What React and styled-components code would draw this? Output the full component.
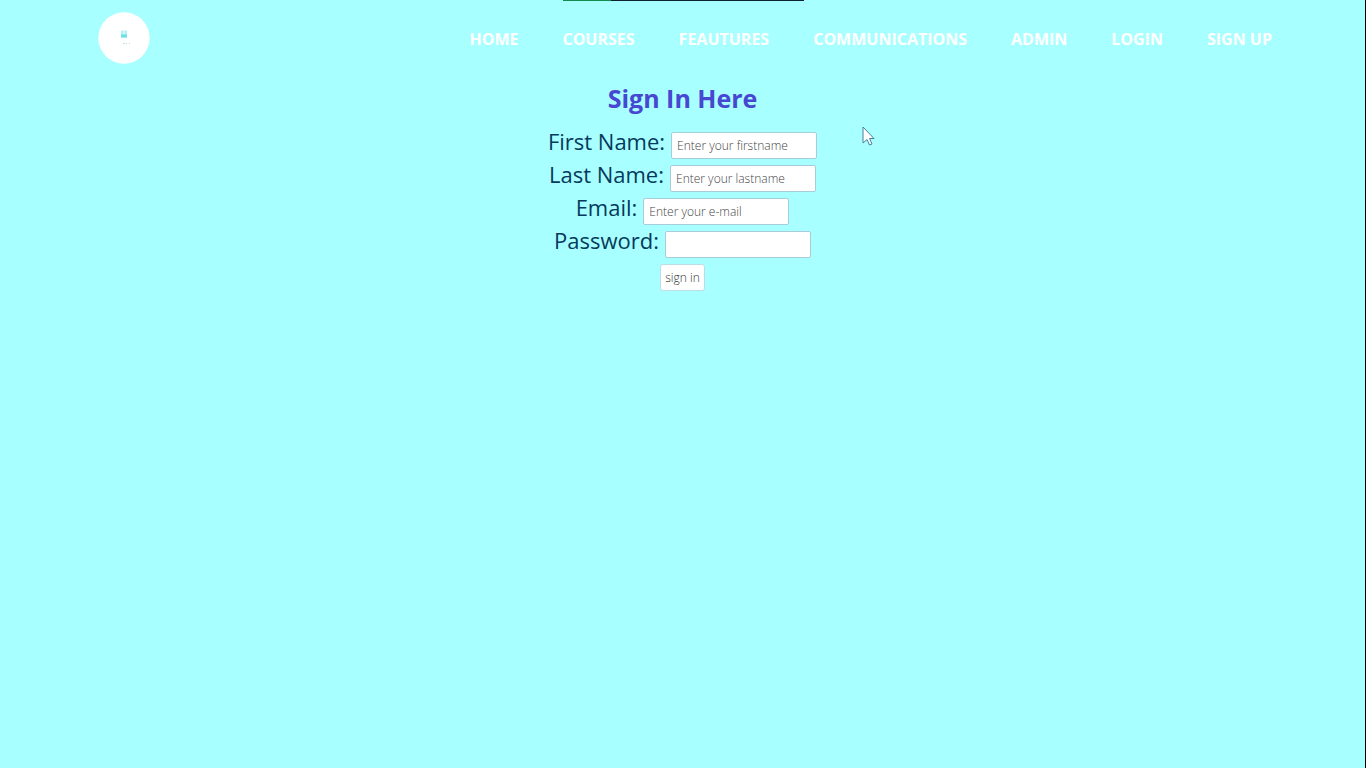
import React from "react";
import styled, { createGlobalStyle } from "styled-components";

const GlobalStyle = createGlobalStyle`
  *, *::before, *::after { box-sizing: border-box; }
  body {
    margin: 0;
    background: #a8ffff;
    font-family: "Open Sans", "Noto Sans", sans-serif;
  }
`;

const Page = styled.div`
  position: relative;
  min-height: 100vh;
  border-right: 1px solid #000;
`;

const LoadingStrip = styled.div`
  position: absolute;
  top: 0;
  left: 563px;
  width: 241px;
  height: 1px;
  background: linear-gradient(to right, #128a50 20%, #0c2230 20%);
`;

const Header = styled.header`
  display: flex;
  align-items: center;
  justify-content: space-between;
  height: 76px;
  padding: 0 93px 0 98px;
`;

const LogoLink = styled.a`
  display: block;
  width: 52px;
  height: 52px;

  svg { display: block; }
`;

const NavList = styled.ul`
  display: flex;
  gap: 44px;
  margin: 0;
  padding: 2px 0 0;
  list-style: none;
`;

const NavLink = styled.a`
  color: #fff;
  font-size: 16px;
  font-weight: 700;
  line-height: 24px;
  text-decoration: none;
  white-space: nowrap;
`;

const Form = styled.form`
  display: flex;
  flex-direction: column;
  align-items: center;
  gap: 2px;
`;

const Title = styled.h1`
  margin: 4px 0 10px;
  color: #4747d1;
  font-size: 25px;
  font-weight: 700;
  line-height: 36px;
`;

const Field = styled.div`
  display: flex;
  align-items: baseline;
  gap: 6px;
`;

const Label = styled.label`
  color: #053a5c;
  font-size: 22px;
  line-height: 27px;
`;

const TextInput = styled.input`
  width: 146px;
  height: 27px;
  padding: 0 5px;
  border: 1px solid #a9cdd8;
  border-radius: 2px;
  background: #fff;
  color: #333;
  font: 300 12px/24px "Open Sans", "Noto Sans", sans-serif;

  &::placeholder {
    color: #444;
    opacity: 1;
  }
`;

const SubmitButton = styled.button`
  height: 27px;
  margin-top: 4px;
  padding: 0 4px;
  border: 1px solid #bcdde6;
  border-radius: 3px;
  background: #fff;
  color: #333;
  font: 300 12px/24px "Open Sans", "Noto Sans", sans-serif;
`;

const Pointer = styled.svg`
  position: absolute;
  top: 126px;
  left: 862px;
`;

const navItems = ["HOME", "COURSES", "FEAUTURES", "COMMUNICATIONS", "ADMIN", "LOGIN", "SIGN UP"];

const fields = [
  { id: "firstname", label: "First Name:", type: "text", placeholder: "Enter your firstname" },
  { id: "lastname", label: "Last Name:", type: "text", placeholder: "Enter your lastname" },
  { id: "email", label: "Email:", type: "email", placeholder: "Enter your e-mail" },
  { id: "password", label: "Password:", type: "password" },
];

function Logo() {
  return (
    <svg width="52" height="52" viewBox="0 0 52 52" aria-hidden="true">
      <circle cx="26" cy="26" r="25.7" fill="#fff" />
      <path d="M23 18.500h6v7h-6z" fill="#b4f1f4" />
      <path d="M25.500 18.500h1v4h-1z" fill="#e6fcfc" />
      <path d="M23 22.500h6v3h-6z" fill="#6fdfe6" />
      <path d="M25 31.500h2M28 31.500h1M31 31.500h1" stroke="#bfe0d8" />
    </svg>
  );
}

export default function App() {
  return (
    <Page>
      <GlobalStyle />
      <LoadingStrip />
      <Header>
        <LogoLink href="#" aria-label="Home page"><Logo /></LogoLink>
        <nav>
          <NavList>
            {navItems.map((item) => (
              <li key={item}><NavLink href="#">{item}</NavLink></li>
            ))}
          </NavList>
        </nav>
      </Header>
      <main>
        <Form onSubmit={(event) => event.preventDefault()}>
          <Title>Sign In Here</Title>
          {fields.map(({ id, label, type, placeholder }) => (
            <Field key={id}>
              <Label htmlFor={id}>{label}</Label>
              <TextInput id={id} name={id} type={type} placeholder={placeholder} />
            </Field>
          ))}
          <SubmitButton type="submit">sign in</SubmitButton>
        </Form>
      </main>
      <Pointer width="13" height="21" viewBox="0 0 13 21" aria-hidden="true">
        <path d="M1 1v16l4-3.500 2.500 5.500 2.500-1-2.500-5.500h4.500z" fill="#fff" stroke="#4a7f9c" strokeLinejoin="round" />
      </Pointer>
    </Page>
  );
}
